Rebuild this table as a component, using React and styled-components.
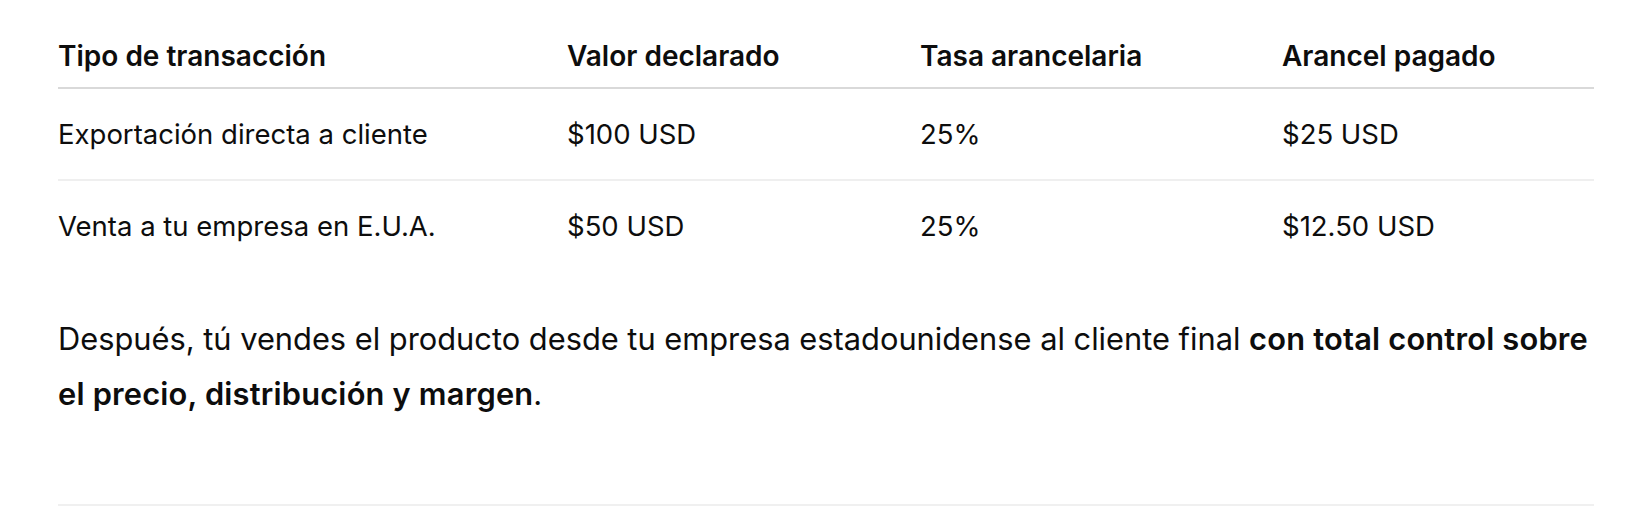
import React from "react";
import styled, { createGlobalStyle } from "styled-components";

const GlobalStyle = createGlobalStyle`
  html, body {
    margin: 0;
    padding: 0;
    background: #ffffff;
  }
  body {
    font-family: Inter, "Noto Sans", "Liberation Sans", sans-serif;
    color: #0d0d0d;
    -webkit-font-smoothing: antialiased;
  }
`;

const Article = styled.article`
  width: 1536px;
  margin: 0 auto;
  padding: 37px 0 0 0;
`;

const Table = styled.table`
  width: 100%;
  border-collapse: collapse;
  font-size: 27.5px;
  line-height: 38px;
`;

const HeadCell = styled.th`
  text-align: left;
  font-weight: 600;
  font-size: 28px;
  padding: 0 0 12px 0;
  border-bottom: 2px solid #d9d9d9;
  width: ${props => props.w};
`;

const Row = styled.tr`
  & + & td {
    border-top: 2px solid #efefef;
  }
`;

const Cell = styled.td`
  padding: 26px 0;
  font-weight: 400;
`;

const Paragraph = styled.p`
  margin: 40px 0 0 0;
  font-size: 30.8px;
  line-height: 55px;

  strong {
    font-weight: 600;
    letter-spacing: 0.2px;
  }
`;

const Rule = styled.hr`
  margin: 83px 0 0 0;
  border: 0;
  height: 2px;
  background: #f0f0f0;
`;

const columns = [
  { label: "Tipo de transacción", w: "509px" },
  { label: "Valor declarado", w: "353px" },
  { label: "Tasa arancelaria", w: "362px" },
  { label: "Arancel pagado", w: "312px" },
];

const rows = [
  ["Exportación directa a cliente", "$100 USD", "25%", "$25 USD"],
  ["Venta a tu empresa en E.U.A.", "$50 USD", "25%", "$12.50 USD"],
];

export default function App() {
  return (
    <>
      <GlobalStyle />
      <Article>
        <Table>
          <thead>
            <tr>
              {columns.map(c => (
                <HeadCell key={c.label} w={c.w}>{c.label}</HeadCell>
              ))}
            </tr>
          </thead>
          <tbody>
            {rows.map(r => (
              <Row key={r[0]}>
                {r.map((v, i) => (
                  <Cell key={i}>{v}</Cell>
                ))}
              </Row>
            ))}
          </tbody>
        </Table>
        <Paragraph>
          Después, tú vendes el producto desde tu empresa estadounidense al cliente final{" "}
          <strong>con total control sobre el precio, distribución y margen</strong>.
        </Paragraph>
        <Rule />
      </Article>
    </>
  );
}
